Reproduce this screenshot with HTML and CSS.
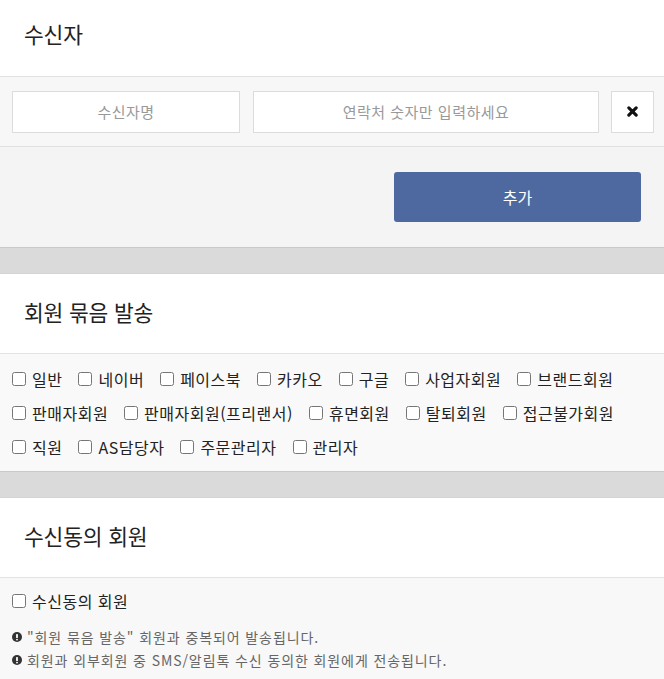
FILE: index.html
```html
<!DOCTYPE html>
<html lang="ko">
<head>
<meta charset="utf-8">
<title>수신자</title>
<link rel="stylesheet" href="styles.css">
</head>
<body>
<div class="page">
  <section class="panel">
    <div class="head head-top">수신자</div>
    <div class="input-row">
      <input class="field field-name" type="text" placeholder="수신자명">
      <input class="field field-phone" type="text" placeholder="연락처 숫자만 입력하세요">
      <button class="clear" type="button" aria-label="삭제">
        <svg width="11" height="11" viewBox="0 0 12 12"><path d="M2 2 L10 10 M10 2 L2 10" stroke="#111" stroke-width="3.4" stroke-linecap="round" fill="none"/></svg>
      </button>
    </div>
    <div class="action-row">
      <button class="add" type="button">추가</button>
    </div>
  </section>

  <div class="divider"></div>

  <section class="panel">
    <div class="head">회원 묶음 발송</div>
    <div class="checks">
      <label class="check"><input type="checkbox"><span>일반</span></label>
      <label class="check"><input type="checkbox"><span>네이버</span></label>
      <label class="check"><input type="checkbox"><span>페이스북</span></label>
      <label class="check"><input type="checkbox"><span>카카오</span></label>
      <label class="check"><input type="checkbox"><span>구글</span></label>
      <label class="check"><input type="checkbox"><span>사업자회원</span></label>
      <label class="check"><input type="checkbox"><span>브랜드회원</span></label>
      <label class="check"><input type="checkbox"><span>판매자회원</span></label>
      <label class="check"><input type="checkbox"><span>판매자회원(프리랜서)</span></label>
      <label class="check"><input type="checkbox"><span>휴면회원</span></label>
      <label class="check"><input type="checkbox"><span>탈퇴회원</span></label>
      <label class="check"><input type="checkbox"><span>접근불가회원</span></label>
      <label class="check"><input type="checkbox"><span>직원</span></label>
      <label class="check"><input type="checkbox"><span>AS담당자</span></label>
      <label class="check"><input type="checkbox"><span>주문관리자</span></label>
      <label class="check"><input type="checkbox"><span>관리자</span></label>
    </div>
  </section>

  <div class="divider"></div>

  <section class="panel">
    <div class="head">수신동의 회원</div>
    <div class="consent">
      <label class="check"><input type="checkbox"><span>수신동의 회원</span></label>
      <p class="note"><svg class="note-icon" width="10" height="10" viewBox="0 0 10 10"><circle cx="5" cy="5" r="5" fill="#333"/><rect x="4.1" y="2" width="1.8" height="4" rx="0.6" fill="#fff"/><circle cx="5" cy="7.6" r="0.95" fill="#fff"/></svg><span>"회원 묶음 발송" 회원과 중복되어 발송됩니다.</span></p>
      <p class="note"><svg class="note-icon" width="10" height="10" viewBox="0 0 10 10"><circle cx="5" cy="5" r="5" fill="#333"/><rect x="4.1" y="2" width="1.8" height="4" rx="0.6" fill="#fff"/><circle cx="5" cy="7.6" r="0.95" fill="#fff"/></svg><span>회원과 외부회원 중 SMS/알림톡 수신 동의한 회원에게 전송됩니다.</span></p>
    </div>
  </section>
</div>
</body>
</html>
```

FILE: styles.css
```css
* {
  box-sizing: border-box;
}

html, body {
  margin: 0;
  padding: 0;
  background: #f8f8f8;
}

body {
  font-family: "Noto Sans CJK KR", "Malgun Gothic", sans-serif;
  color: #222;
}

.page {
  width: 664px;
}

.panel {
  display: flex;
  flex-direction: column;
}

.head {
  height: 80px;
  padding: 0 24px 5px;
  display: flex;
  align-items: center;
  background: #fff;
  border-bottom: 1px solid #e3e3e3;
  font-size: 21.5px;
  color: #222;
  letter-spacing: -0.2px;
}

.head-top {
  height: 77px;
  padding-bottom: 9px;
}

.input-row {
  display: flex;
  align-items: center;
  height: 70px;
  padding: 0 10px 0 12px;
  background: #f7f7f7;
  border-bottom: 1px solid #e0e0e0;
}

.field {
  height: 42px;
  margin: 0;
  padding: 0 10px;
  border: 1px solid #dcdcdc;
  background: #fff;
  font-family: inherit;
  font-size: 15px;
  letter-spacing: 0.5px;
  text-align: center;
  color: #333;
  outline: none;
}

.field::placeholder {
  color: #999;
}

.field-name {
  width: 228px;
  margin-right: 13px;
}

.field-phone {
  width: 346px;
  margin-right: 12px;
}

.clear {
  width: 43px;
  height: 42px;
  margin: 0;
  padding: 0;
  border: 1px solid #dcdcdc;
  background: #fff;
  display: flex;
  align-items: center;
  justify-content: center;
}

.action-row {
  display: flex;
  justify-content: flex-end;
  height: 100px;
  padding: 25px 23px 0 0;
  background: #f4f4f4;
}

.add {
  width: 247px;
  height: 50px;
  margin: 0;
  border: none;
  border-radius: 3px;
  background: #4d69a0;
  color: #fff;
  font-family: inherit;
  font-size: 16px;
}

.divider {
  height: 27px;
  background: #dadada;
  border-top: 1px solid #c9c9c9;
  border-bottom: 1px solid #d4d4d4;
}

.checks {
  display: flex;
  flex-wrap: wrap;
  column-gap: 16px;
  height: 117px;
  padding: 8px 12px 7px;
  background: #f9f9f9;
}

.check {
  display: flex;
  align-items: center;
  gap: 6px;
  height: 34px;
  font-size: 16px;
  letter-spacing: 0.5px;
  color: #222;
}

.check input {
  width: 14px;
  height: 14px;
  margin: 0;
}

.consent {
  padding: 6px 12px 0;
  background: #f8f8f8;
  min-height: 110px;
}

.note {
  display: flex;
  align-items: center;
  gap: 5px;
  margin: 0;
  height: 23px;
  font-size: 14px;
  letter-spacing: 0.9px;
  color: #666;
}

.consent .check + .note {
  margin-top: 7px;
}

.note-icon {
  flex: none;
}
```
